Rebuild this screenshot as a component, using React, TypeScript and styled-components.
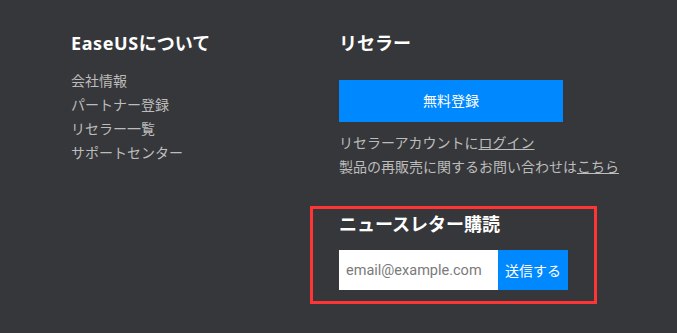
import React from "react";
import styled, { createGlobalStyle } from "styled-components";

const GlobalStyle = createGlobalStyle`
    html, body {
        margin: 0;
        padding: 0;
        background: #36373a;
    }
    * {
        box-sizing: border-box;
    }
`;

const Footer = styled.footer`
    display: grid;
    grid-template-columns: 268px 1fr;
    height: 333px;
    padding: 31px 0 0 71px;
    background: #36373a;
    font-family: "Noto Sans", "Noto Sans CJK JP", sans-serif;
    color: #bcbcbc;
`;

const Column = styled.div`
    display: flex;
    flex-direction: column;
    align-items: flex-start;
`;

const Heading = styled.h3`
    margin: 0;
    font-size: 18px;
    line-height: 24px;
    font-weight: 700;
    color: #ffffff;
`;

const Brand = styled.span`
    letter-spacing: 0.6px;
`;

const LinkList = styled.ul`
    list-style: none;
    margin: 14px 0 0;
    padding: 0;
`;

const LinkItem = styled.li`
    font-size: 14px;
    line-height: 24px;
    color: #bcbcbc;
`;

const SignupButton = styled.button`
    width: 224px;
    height: 42px;
    margin-top: 25px;
    padding: 0 0 2px;
    border: none;
    background: #0088ff;
    color: #ffffff;
    font-family: inherit;
    font-size: 14px;
`;

const Notes = styled.div`
    margin-top: 9px;
`;

const Note = styled.p`
    margin: 0;
    font-size: 14px;
    line-height: 24px;
    color: #bcbcbc;
`;

const Underlined = styled.a`
    color: #bcbcbc;
    text-decoration: underline;
`;

const Highlight = styled.section`
    width: 287px;
    height: 98px;
    margin: 27px 0 0 -29px;
    padding: 3px 0 0 26px;
    border: 3px solid #ff3535;
`;

const Subscribe = styled.form`
    display: flex;
    margin-top: 14px;
`;

const EmailInput = styled.input`
    width: 159px;
    height: 40px;
    padding: 0 7px;
    border: none;
    outline: none;
    background: #ffffff;
    font-family: Roboto, "Liberation Sans", sans-serif;
    font-size: 14.5px;
    color: #333;
    &::placeholder {
        color: #7a7a7a;
    }
`;

const SendButton = styled.button`
    width: 70px;
    height: 40px;
    border: none;
    background: #0088ff;
    color: #ffffff;
    font-family: "Noto Sans", "Noto Sans CJK JP", sans-serif;
    font-size: 14px;
`;

export default function App() {
    return (
        <>
            <GlobalStyle />
            <Footer>
                <Column>
                    <Heading>
                        <Brand>EaseUS</Brand>について
                    </Heading>
                    <LinkList>
                        <LinkItem>会社情報</LinkItem>
                        <LinkItem>パートナー登録</LinkItem>
                        <LinkItem>リセラー一覧</LinkItem>
                        <LinkItem>サポートセンター</LinkItem>
                    </LinkList>
                </Column>
                <Column>
                    <Heading>リセラー</Heading>
                    <SignupButton type="button">無料登録</SignupButton>
                    <Notes>
                        <Note>
                            リセラーアカウントに<Underlined>ログイン</Underlined>
                        </Note>
                        <Note>
                            製品の再販売に関するお問い合わせは<Underlined>こちら</Underlined>
                        </Note>
                    </Notes>
                    <Highlight>
                        <Heading>ニュースレター購読</Heading>
                        <Subscribe onSubmit={(e) => e.preventDefault()}>
                            <EmailInput type="email" placeholder="email@example.com" />
                            <SendButton type="submit">送信する</SendButton>
                        </Subscribe>
                    </Highlight>
                </Column>
            </Footer>
        </>
    );
}
